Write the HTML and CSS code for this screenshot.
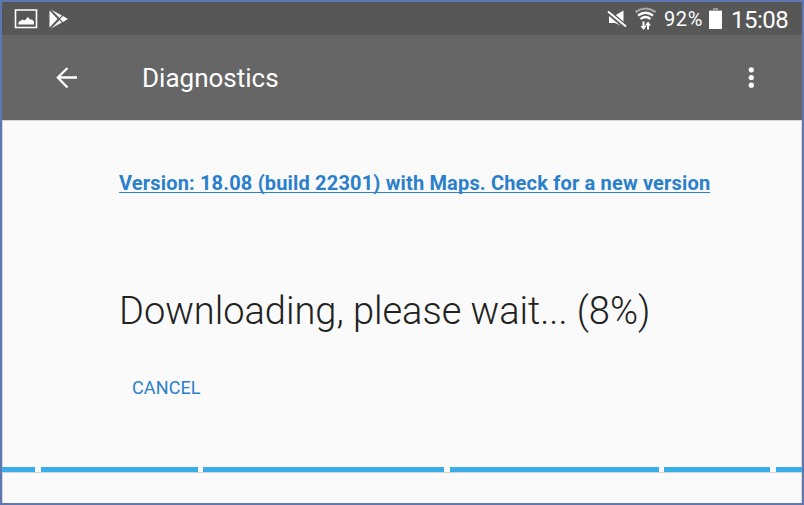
FILE: index.html
```html
<!DOCTYPE html>
<html lang="en">
<head>
<meta charset="utf-8">
<title>Diagnostics</title>
<link rel="stylesheet" href="styles.css">
</head>
<body>
<div class="screen">
  <header class="status">
    <svg class="picture" width="24" height="20" viewBox="0 0 24 20"><path d="M1.500 1h21v17.500h-21z" fill="none" stroke="#fff" stroke-width="1.600"/><path d="M4.500 15.500v-2.500l4-2.500 2 1 3.500-3.500 2 2.500h2l2 2v3z" fill="#fff"/></svg>
    <svg class="play" width="20" height="20" viewBox="0 0 20 20"><path d="M.5 1.500v17L8.500 10z" fill="#fff"/><path d="M2 .5l11 6-2.500 2.500zM2 19.500l11-6-2.500-2.500z" fill="#eee"/><path d="M11 10l3-3 5 3-5 3z" fill="#fff"/></svg>
    <div class="indicators">
      <svg class="mute" width="20" height="20" viewBox="0 0 20 20"><path d="M2 6.500h6l8.500-5V18L8 14H2z" fill="#fff"/><path d="M0 2l19 16" stroke="#575757" stroke-width="5"/><path d="M1 2.500l18 15" stroke="#fff" stroke-width="2"/></svg>
      <svg class="wifi" width="24" height="24" viewBox="0 0 24 24" fill="none" stroke="#fff" stroke-width="2.200"><path d="M1.500 5Q11.500-2 21.500 5" stroke="#aaa"/><path d="M4 8.500Q11.500 3 19 8.500M6.500 12Q11.500 8 16.500 12"/><path d="M9.500 14.500v6M14 22.500v-6" stroke-width="2"/><path d="M6.500 19h6l-3 4zM11 18.500h6l-3-4z" fill="#fff" stroke="none"/></svg>
      <span class="percent">92%</span>
      <svg class="battery" width="13" height="21" viewBox="0 0 13 21"><path d="M4 0h5v2h4v3H0V2h4z" fill="#9b9b9b"/><path d="M0 3h13v18H0z" fill="#fff"/></svg>
      <span class="clock">15:08</span>
    </div>
  </header>
  <nav class="toolbar">
    <svg class="back" width="22" height="22" viewBox="0 0 22 22"><path d="M11.500 1L1.800 10.500l9.700 10M2 10.500h19" fill="none" stroke="#fff" stroke-width="2.300"/></svg>
    <h1>Diagnostics</h1>
    <svg class="more" width="6" height="22" viewBox="0 0 6 22" fill="#fff"><circle cx="3.300" cy="2.800" r="2.600"/><circle cx="3.300" cy="10.500" r="2.600"/><circle cx="3.300" cy="18.200" r="2.600"/></svg>
  </nav>
  <main>
    <a class="version" href="#">Version: 18.08 (build 22301) with Maps. Check for a new version</a>
    <p class="message">Downloading, please wait... (8%)</p>
    <button class="cancel">CANCEL</button>
    <div class="progress"><i></i><i></i><i></i><i></i><i></i><i></i></div>
  </main>
</div>
</body>
</html>
```
FILE: styles.css
```css
* { box-sizing: border-box; }
body { margin: 0; font-family: Roboto, sans-serif; }
.screen { width: 804px; height: 505px; border: 2px solid #5f78b2; background: #fafafa; display: flex; flex-direction: column; overflow: hidden; }
svg { display: block; flex: none; }
.status { height: 33px; flex: none; background: #575757; color: #fff; display: flex; align-items: flex-start; padding: 7px 13px 0 12px; }
.play { margin-left: 11px; }
.indicators { margin-left: auto; display: flex; align-items: flex-start; }
.mute { margin-right: 7px; }
.wifi { margin: -2px 6px 0 0; }
.percent { width: 45px; font-size: 20px; line-height: 23px; letter-spacing: 0.6px; margin-top: -1px; white-space: nowrap; }
.battery { margin: -1px 9px 0 0; }
.clock { width: 58px; font-size: 24px; line-height: 28px; letter-spacing: -0.5px; margin-top: -3px; white-space: nowrap; }
.toolbar { height: 85px; flex: none; background: #666; color: #fff; display: flex; align-items: center; padding: 0 48px 0 54px; }
h1 { margin: 0 auto 0 64px; font-size: 26px; line-height: 30px; font-weight: 400; white-space: nowrap; }
main { flex: 1; border: 1px solid #d5d5d5; border-bottom: 0; display: flex; flex-direction: column; align-items: flex-start; }
.version { margin: 50px 0 0 116px; font-size: 20px; line-height: 24px; letter-spacing: 0.17px; font-weight: 700; color: #2a80cb; text-decoration-thickness: 1px; text-underline-offset: 2px; text-decoration-skip-ink: none; white-space: nowrap; }
.message { margin: 93px 0 0 116px; font-size: 38px; line-height: 46px; font-weight: 300; letter-spacing: -0.02px; color: #212121; white-space: nowrap; }
.cancel { margin: 43px 0 0 129px; padding: 0; border: 0; background: none; font: 400 18px/22px Roboto, sans-serif; letter-spacing: 0.12px; color: #2a80cb; white-space: nowrap; }
.progress { align-self: stretch; margin: 68px -1px 0; height: 6px; display: grid; grid-template-columns: 33px 157px 241px 209px 106px 1fr; column-gap: 5.500px; border-bottom: 1px solid #d3d3d3; }
.progress i { background: #39ade7; }
```
